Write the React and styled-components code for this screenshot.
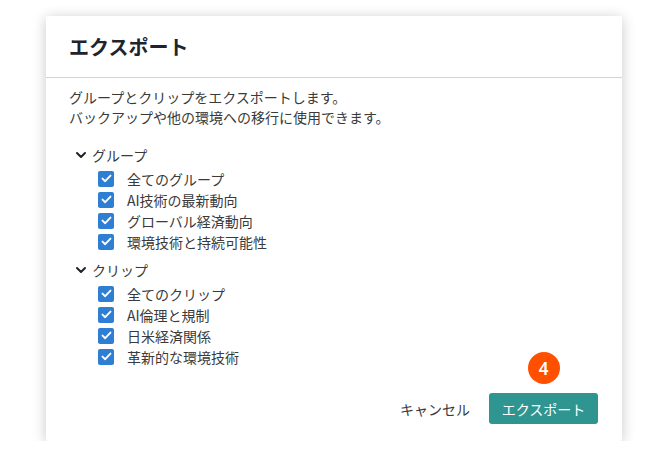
import React from "react";
import styled, { createGlobalStyle } from "styled-components";

const Global = createGlobalStyle`
  html, body { margin: 0; padding: 0; background: #ffffff; }
  body { font-family: "Noto Sans CJK JP", "Noto Sans", sans-serif; color: #3a3a3a; }
`;

const Page = styled.div`
  padding: 16px 0 0 46px;
`;

const Dialog = styled.div`
  position: relative;
  width: 576px;
  height: 425px;
  background: #fff;
  border-radius: 2px;
  box-shadow: 0 2px 14px rgba(0, 0, 0, 0.22);
  display: flex;
  flex-direction: column;
  box-sizing: border-box;
`;

const Header = styled.div`
  height: 62px;
  box-sizing: border-box;
  display: flex;
  align-items: center;
  padding: 0 23px;
  border-bottom: 1px solid #c9d6e0;
`;

const Title = styled.h2`
  margin: 0;
  font-size: 20px;
  font-weight: 700;
  color: #1e232d;
  line-height: 28px;
`;

const Body = styled.div`
  flex: 1;
  padding: 9px 23px 0;
`;

const Desc = styled.p`
  margin: 0;
  font-size: 14px;
  line-height: 20px;
  color: #3a3a3a;
`;

const Section = styled.div`
  margin-top: ${(p) => p.$mt}px;
`;

const SectionHead = styled.div`
  display: flex;
  align-items: center;
  height: 20px;
  font-size: 14px;
  color: #3a3a3a;
  gap: 5px;
  padding-left: 6px;
`;

const List = styled.ul`
  list-style: none;
  margin: 3px 0 0;
  padding: 0 0 0 29px;
`;

const Item = styled.li`
  display: flex;
  align-items: center;
  height: 21px;
  font-size: 14px;
  color: #3a3a3a;
`;

const Box = styled.span`
  width: 16px;
  height: 16px;
  border-radius: 2px;
  background: #2e7fd3;
  display: flex;
  align-items: center;
  justify-content: center;
  margin-right: 13px;
  flex-shrink: 0;
`;

const Footer = styled.div`
  display: flex;
  justify-content: flex-end;
  align-items: center;
  padding: 0 24px 17px;
  gap: 19px;
`;

const Cancel = styled.button`
  background: none;
  border: none;
  font-family: inherit;
  font-size: 14px;
  color: #3a3a3a;
  padding: 0;
  height: 31px;
  cursor: pointer;
`;

const Primary = styled.button`
  position: relative;
  width: 109px;
  height: 31px;
  border: none;
  border-radius: 3px;
  background: #2f9590;
  color: #fff;
  font-family: inherit;
  font-size: 14px;
  cursor: pointer;
`;

const Badge = styled.span`
  position: absolute;
  left: 50%;
  top: -41px;
  transform: translateX(-50%);
  width: 32px;
  height: 32px;
  border-radius: 50%;
  background: #ff5000;
  color: #fff;
  font-family: "Noto Sans", sans-serif;
  font-size: 17px;
  font-weight: 600;
  display: flex;
  align-items: center;
  justify-content: center;
`;

const Check = () => (
  <svg width="11" height="9" viewBox="0 0 11 9">
    <path d="M1.5 4.6 L4.2 7.2 L9.5 1.6" fill="none" stroke="#fff" strokeWidth="1.9" strokeLinecap="round" strokeLinejoin="round" />
  </svg>
);

const Chevron = () => (
  <svg width="12" height="8" viewBox="0 0 12 8">
    <path d="M2 2 L6 6 L10 2" fill="none" stroke="#222" strokeWidth="2" strokeLinecap="round" strokeLinejoin="round" />
  </svg>
);

const groups = [
  { name: "グループ", items: ["全てのグループ", "AI技術の最新動向", "グローバル経済動向", "環境技術と持続可能性"], mt: 18 },
  { name: "クリップ", items: ["全てのクリップ", "AI倫理と規制", "日米経済関係", "革新的な環境技術"], mt: 8 },
];

export default function App() {
  return (
    <>
      <Global />
      <Page>
        <Dialog>
          <Header>
            <Title>エクスポート</Title>
          </Header>
          <Body>
            <Desc>
              グループとクリップをエクスポートします。
              <br />
              バックアップや他の環境への移行に使用できます。
            </Desc>
            {groups.map((g) => (
              <Section key={g.name} $mt={g.mt}>
                <SectionHead>
                  <Chevron />
                  {g.name}
                </SectionHead>
                <List>
                  {g.items.map((it) => (
                    <Item key={it}>
                      <Box>
                        <Check />
                      </Box>
                      {it}
                    </Item>
                  ))}
                </List>
              </Section>
            ))}
          </Body>
          <Footer>
            <Cancel>キャンセル</Cancel>
            <Primary>
              エクスポート
              <Badge>4</Badge>
            </Primary>
          </Footer>
        </Dialog>
      </Page>
    </>
  );
}
